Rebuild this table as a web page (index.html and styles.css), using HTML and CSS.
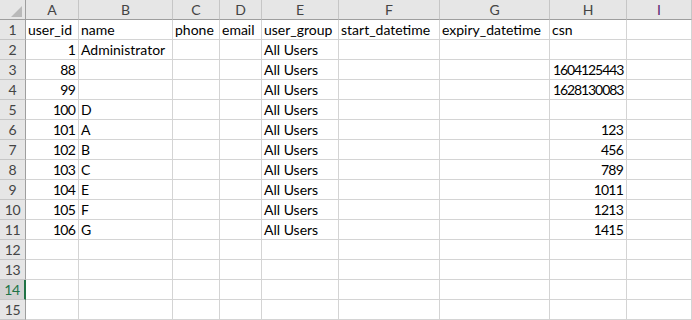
FILE: index.html
```html
<!DOCTYPE html>
<html>
<head>
<meta charset="utf-8">
<link rel="stylesheet" href="styles.css">
</head>
<body>
<div class="sheet">
  <div class="hd corner"><span class="tri"></span></div>
  <div class="hd col">A</div><div class="hd col">B</div><div class="hd col">C</div><div class="hd col">D</div><div class="hd col">E</div><div class="hd col">F</div><div class="hd col">G</div><div class="hd col">H</div><div class="hd col col-i">I</div><div class="hd col"></div>

  <div class="hd rn">1</div><div class="c">user_id</div><div class="c">name</div><div class="c">phone</div><div class="c">email</div><div class="c">user_group</div><div class="c">start_datetime</div><div class="c">expiry_datetime</div><div class="c">csn</div><div class="c"></div><div class="c"></div>

  <div class="hd rn">2</div><div class="c n">1</div><div class="c">Administrator</div><div class="c"></div><div class="c"></div><div class="c">All Users</div><div class="c"></div><div class="c"></div><div class="c"></div><div class="c"></div><div class="c"></div>

  <div class="hd rn">3</div><div class="c n">88</div><div class="c"></div><div class="c"></div><div class="c"></div><div class="c">All Users</div><div class="c"></div><div class="c"></div><div class="c t">1604125443</div><div class="c"></div><div class="c"></div>

  <div class="hd rn">4</div><div class="c n">99</div><div class="c"></div><div class="c"></div><div class="c"></div><div class="c">All Users</div><div class="c"></div><div class="c"></div><div class="c t">1628130083</div><div class="c"></div><div class="c"></div>

  <div class="hd rn">5</div><div class="c n">100</div><div class="c">D</div><div class="c"></div><div class="c"></div><div class="c">All Users</div><div class="c"></div><div class="c"></div><div class="c"></div><div class="c"></div><div class="c"></div>

  <div class="hd rn">6</div><div class="c n">101</div><div class="c">A</div><div class="c"></div><div class="c"></div><div class="c">All Users</div><div class="c"></div><div class="c"></div><div class="c n">123</div><div class="c"></div><div class="c"></div>

  <div class="hd rn">7</div><div class="c n">102</div><div class="c">B</div><div class="c"></div><div class="c"></div><div class="c">All Users</div><div class="c"></div><div class="c"></div><div class="c n">456</div><div class="c"></div><div class="c"></div>

  <div class="hd rn">8</div><div class="c n">103</div><div class="c">C</div><div class="c"></div><div class="c"></div><div class="c">All Users</div><div class="c"></div><div class="c"></div><div class="c n">789</div><div class="c"></div><div class="c"></div>

  <div class="hd rn">9</div><div class="c n">104</div><div class="c">E</div><div class="c"></div><div class="c"></div><div class="c">All Users</div><div class="c"></div><div class="c"></div><div class="c n">1011</div><div class="c"></div><div class="c"></div>

  <div class="hd rn">10</div><div class="c n">105</div><div class="c">F</div><div class="c"></div><div class="c"></div><div class="c">All Users</div><div class="c"></div><div class="c"></div><div class="c n">1213</div><div class="c"></div><div class="c"></div>

  <div class="hd rn">11</div><div class="c n">106</div><div class="c">G</div><div class="c"></div><div class="c"></div><div class="c">All Users</div><div class="c"></div><div class="c"></div><div class="c n">1415</div><div class="c"></div><div class="c"></div>

  <div class="hd rn">12</div><div class="c"></div><div class="c"></div><div class="c"></div><div class="c"></div><div class="c"></div><div class="c"></div><div class="c"></div><div class="c"></div><div class="c"></div><div class="c"></div>
  <div class="hd rn">13</div><div class="c"></div><div class="c"></div><div class="c"></div><div class="c"></div><div class="c"></div><div class="c"></div><div class="c"></div><div class="c"></div><div class="c"></div><div class="c"></div>
  <div class="hd rn rn-sel">14</div><div class="c"></div><div class="c"></div><div class="c"></div><div class="c"></div><div class="c"></div><div class="c"></div><div class="c"></div><div class="c"></div><div class="c"></div><div class="c"></div>
  <div class="hd rn">15</div><div class="c"></div><div class="c"></div><div class="c"></div><div class="c"></div><div class="c"></div><div class="c"></div><div class="c"></div><div class="c"></div><div class="c"></div><div class="c"></div>
</div>
</body>
</html>
```

FILE: styles.css
```css
html, body {
  margin: 0;
  padding: 0;
  background: #ffffff;
}

.sheet {
  display: grid;
  grid-template-columns: 26px 53px 94px 47px 42px 77px 101px 110px 77px 65px 1fr;
  grid-auto-rows: 20px;
  width: 692px;
  height: 320px;
  overflow: hidden;
  font-family: Lato, "Open Sans", sans-serif;
  font-size: 14px;
  color: #000;
}

.c {
  box-sizing: border-box;
  border-right: 1px solid #d4d4d4;
  border-bottom: 1px solid #d4d4d4;
  padding: 0 2px 0 2px;
  line-height: 19px;
  white-space: nowrap;
  overflow: visible;
}

.n {
  text-align: right;
  letter-spacing: -0.8px;
  padding-right: 3px;
}

.t {
  letter-spacing: -1.1px;
  padding-left: 3px;
}

.hd {
  box-sizing: border-box;
  background: #e6e6e6;
  color: #444444;
  text-align: center;
  line-height: 19px;
}

.col {
  border-right: 1px solid #c6c6c6;
  border-bottom: 1px solid #9e9e9e;
}

.col-i {
  color: #5a2570;
}

.corner {
  position: relative;
  border-right: 1px solid #9e9e9e;
  border-bottom: 1px solid #9e9e9e;
}

.tri {
  position: absolute;
  right: 3px;
  bottom: 2px;
  width: 0;
  height: 0;
  border-left: 11px solid transparent;
  border-bottom: 11px solid #b9b9b9;
}

.rn {
  border-right: 1px solid #9e9e9e;
  border-bottom: 1px solid #c6c6c6;
  letter-spacing: -0.3px;
}

.rn-sel {
  background: #d2d2d2;
  color: #217346;
  border-right: 2px solid #217346;
}
```
